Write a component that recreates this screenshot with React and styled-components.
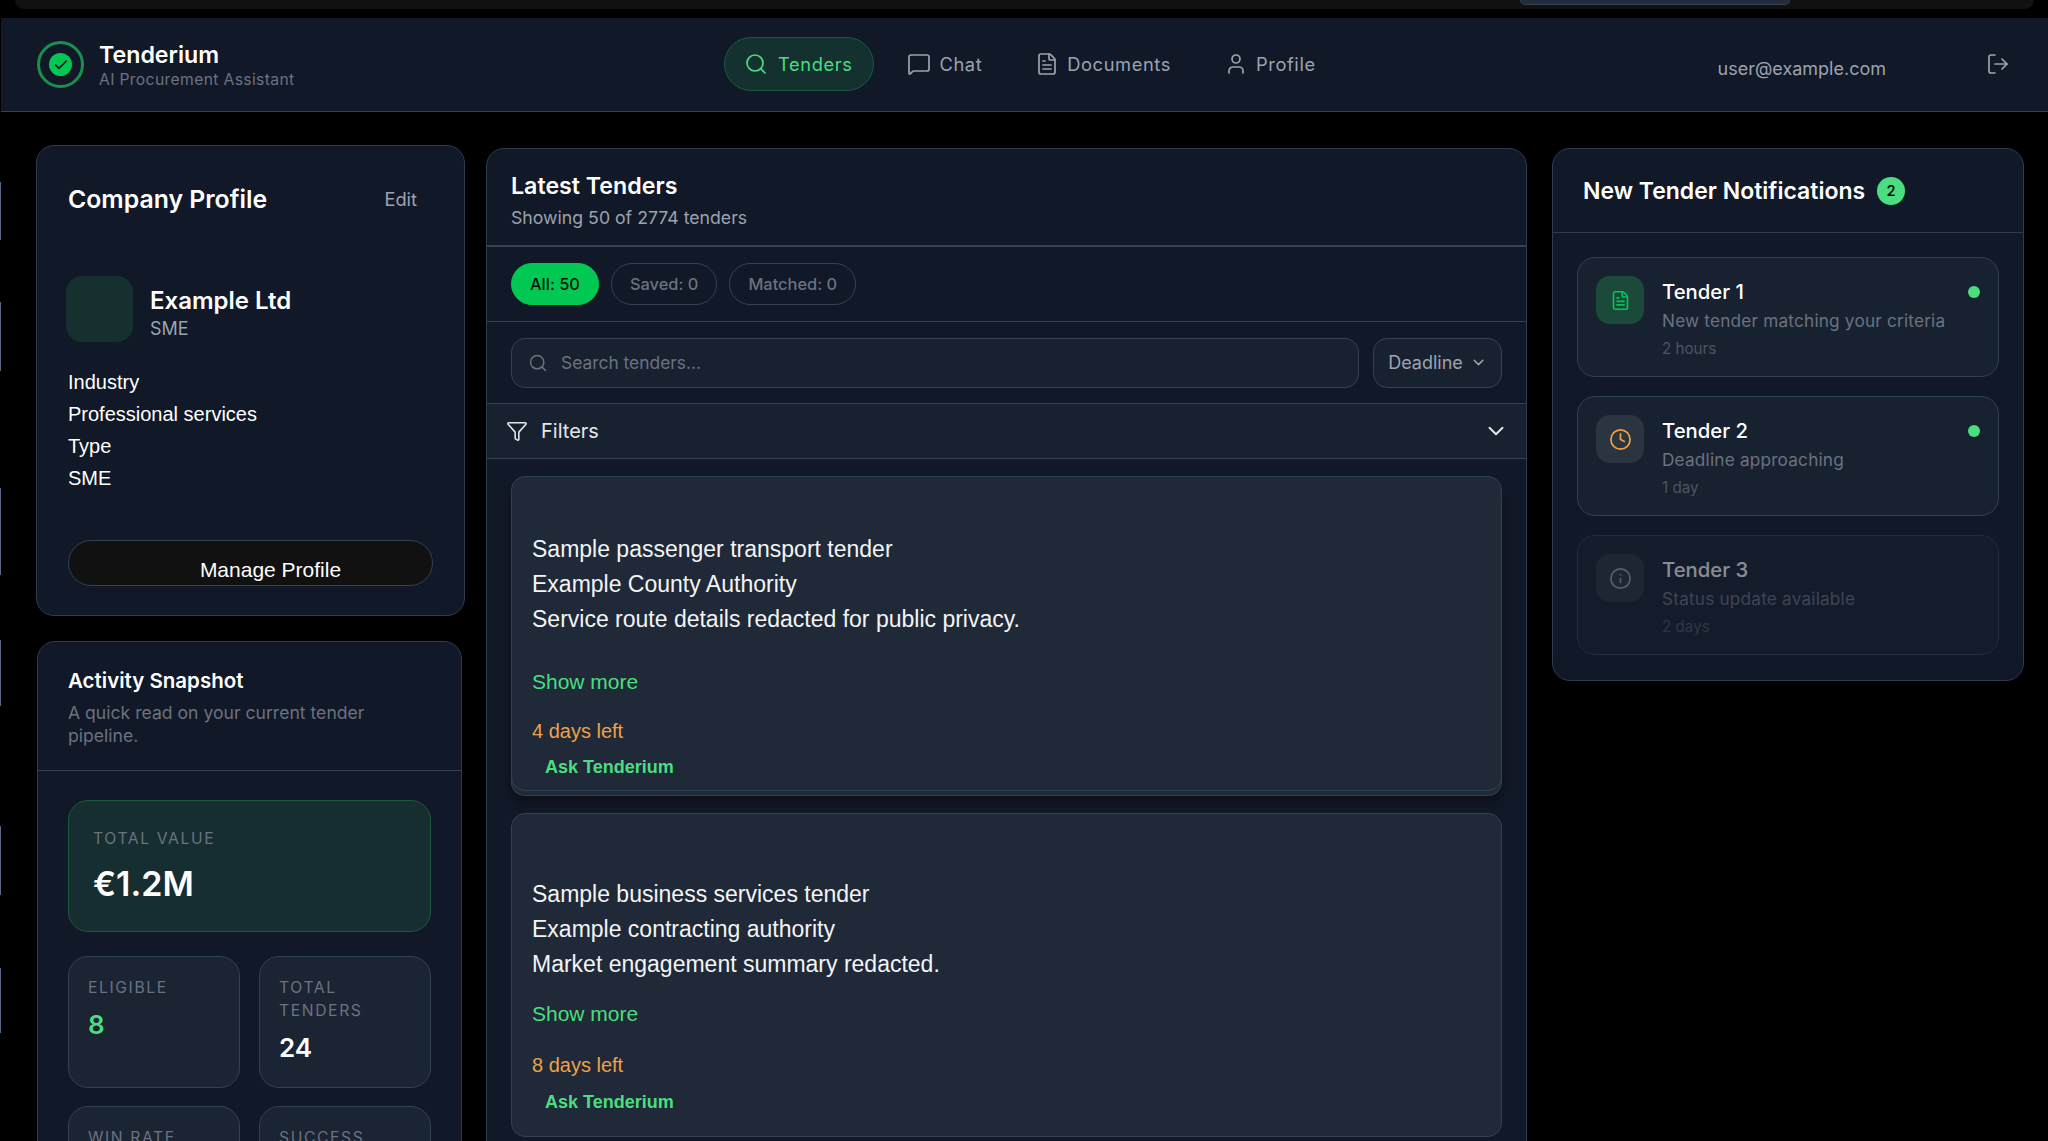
import React from 'react';
import styled, { createGlobalStyle } from 'styled-components';
import { Search, MessageSquare, FileText, User, LogOut, Filter, ChevronDown, Clock, Info, Check } from 'lucide-react';

const notifications = [
    { id: 1, title: 'Tender 1', text: 'New tender matching your criteria', time: '2 hours', kind: 'doc', unread: true },
    { id: 2, title: 'Tender 2', text: 'Deadline approaching', time: '1 day', kind: 'clock', unread: true },
    { id: 3, title: 'Tender 3', text: 'Status update available', time: '2 days', kind: 'info', unread: false },
];

const tenders = [
    {
        lines: ['Sample passenger transport tender', 'Example County Authority', 'Service route details redacted for public privacy.'],
        left: '4 days left', lead: 55, more: 32, days: 23, ask: 11, tail: 11, stacked: true,
    },
    {
        lines: ['Sample business services tender', 'Example contracting authority', 'Market engagement summary redacted.'],
        left: '8 days left', lead: 63, more: 19, days: 25, ask: 12, tail: 22, stacked: false,
    },
];

const noteIcons = { doc: FileText, clock: Clock, info: Info };

const App = () => {
    return (
        <Page>
            <GlobalStyle />
            <TopStrip><StripTab /></TopStrip>
            <Header>
                <Brand>
                    <LogoRing><LogoDot><Check size={16} strokeWidth={2.6} /></LogoDot></LogoRing>
                    <BrandText>
                        <BrandName>Tenderium</BrandName>
                        <BrandSub>AI Procurement Assistant</BrandSub>
                    </BrandText>
                </Brand>
                <Nav>
                    <NavItem $active><Search size={24} strokeWidth={1.7} />Tenders</NavItem>
                    <NavItem><MessageSquare size={24} strokeWidth={1.7} />Chat</NavItem>
                    <NavItem><FileText size={24} strokeWidth={1.7} />Documents</NavItem>
                    <NavItem><User size={24} strokeWidth={1.7} />Profile</NavItem>
                </Nav>
                <Email>user@example.com</Email>
                <LogoutBtn><LogOut size={24} strokeWidth={1.7} /></LogoutBtn>
            </Header>
            <Main>
                <LeftCol>
                    <ProfileCard>
                        <ProfileHead>
                            <ProfileTitle>Company Profile</ProfileTitle>
                            <EditLink>Edit</EditLink>
                        </ProfileHead>
                        <CompanyRow>
                            <Avatar />
                            <CompanyText>
                                <CompanyName>Example Ltd</CompanyName>
                                <CompanyType>SME</CompanyType>
                            </CompanyText>
                        </CompanyRow>
                        <Facts>
                            <div>Industry</div>
                            <div>Professional services</div>
                            <div>Type</div>
                            <div>SME</div>
                        </Facts>
                        <ManageBtn>Manage Profile</ManageBtn>
                    </ProfileCard>
                    <SnapshotCard>
                        <SnapshotHead>
                            <SnapshotTitle>Activity Snapshot</SnapshotTitle>
                            <SnapshotSub>A quick read on your current tender pipeline.</SnapshotSub>
                        </SnapshotHead>
                        <SnapshotBody>
                            <ValueCard>
                                <StatLabel>TOTAL VALUE</StatLabel>
                                <BigValue>€1.2M</BigValue>
                            </ValueCard>
                            <StatGrid>
                                <StatCard>
                                    <StatLabel>ELIGIBLE</StatLabel>
                                    <StatValue $green>8</StatValue>
                                </StatCard>
                                <StatCard>
                                    <StatLabel>TOTAL TENDERS</StatLabel>
                                    <StatValue>24</StatValue>
                                </StatCard>
                                <StatCard>
                                    <StatLabel>WIN RATE</StatLabel>
                                    <StatValue>33%</StatValue>
                                </StatCard>
                                <StatCard>
                                    <StatLabel>SUCCESS</StatLabel>
                                    <StatValue>12</StatValue>
                                </StatCard>
                            </StatGrid>
                        </SnapshotBody>
                    </SnapshotCard>
                </LeftCol>
                <MiddleCard>
                    <ListHead>
                        <ListTitle>Latest Tenders</ListTitle>
                        <ListSub>Showing 50 of 2774 tenders</ListSub>
                    </ListHead>
                    <PillRow>
                        <Pill $active>All: 50</Pill>
                        <Pill>Saved: 0</Pill>
                        <Pill>Matched: 0</Pill>
                    </PillRow>
                    <SearchRow>
                        <SearchBox>
                            <Search size={20} strokeWidth={1.8} />
                            <span>Search tenders...</span>
                        </SearchBox>
                        <SortBtn>Deadline<ChevronDown size={17} strokeWidth={2} /></SortBtn>
                    </SearchRow>
                    <FilterBar>
                        <Filter size={22} strokeWidth={1.7} />
                        <FilterText>Filters</FilterText>
                        <ChevronDown size={26} strokeWidth={1.8} />
                    </FilterBar>
                    <TenderList>
                        {tenders.map((t) => (
                            <TenderCard key={t.left} $lead={t.lead} $tail={t.tail} $stacked={t.stacked}>
                                {t.lines.map((line) => <TenderLine key={line}>{line}</TenderLine>)}
                                <ShowMore $more={t.more}>Show more</ShowMore>
                                <DaysLeft $gap={t.days}>{t.left}</DaysLeft>
                                <AskBtn $gap={t.ask}>Ask Tenderium</AskBtn>
                            </TenderCard>
                        ))}
                    </TenderList>
                </MiddleCard>
                <RightCard>
                    <NoteHead>
                        <NoteHeading>New Tender Notifications</NoteHeading>
                        <CountBadge>2</CountBadge>
                    </NoteHead>
                    <NoteList>
                        {notifications.map((n) => {
                            const Icon = noteIcons[n.kind];
                            return (
                                <NoteCard key={n.id} $dim={!n.unread}>
                                    <NoteIcon $kind={n.kind}><Icon size={n.kind === 'doc' ? 21 : 23} strokeWidth={1.8} /></NoteIcon>
                                    <NoteBody>
                                        <NoteTitle>{n.title}</NoteTitle>
                                        <NoteText>{n.text}</NoteText>
                                        <NoteTime>{n.time}</NoteTime>
                                    </NoteBody>
                                    {n.unread && <UnreadDot />}
                                </NoteCard>
                            );
                        })}
                    </NoteList>
                </RightCard>
            </Main>
        </Page>
    );
};

export default App;

const GlobalStyle = createGlobalStyle`
html, body { margin: 0; padding: 0; background: #000; }
* { box-sizing: border-box; }
`;
const Page = styled.div`
height: 1141px;
overflow: hidden;
color: #fff;
font-family: Inter, "Liberation Sans", sans-serif;
padding-left: 1px;
background: #000 linear-gradient(to bottom,
    transparent 182px, #55687f 182px, #55687f 240px, transparent 240px,
    transparent 302px, #55687f 302px, #55687f 371px, transparent 371px,
    transparent 488px, #55687f 488px, #55687f 575px, transparent 575px,
    transparent 640px, #55687f 640px, #55687f 706px, transparent 706px,
    transparent 826px, #55687f 826px, #55687f 895px, transparent 895px,
    transparent 968px, #55687f 968px, #55687f 1033px, transparent 1033px) 0 0 / 1px 100% no-repeat;
`;
const TopStrip = styled.div`
height: 9px;
margin: 0 14px 9px 14px;
background: #111;
border-radius: 0 0 12px 12px;
padding-left: 1505px;
`;
const StripTab = styled.div`
width: 270px;
height: 5px;
background: #232c3b;
border: 1px solid #374151;
border-top: 0;
border-radius: 0 0 10px 10px;
`;
const Header = styled.header`
height: 94px;
background: #111827;
border-bottom: 1px solid #374151;
display: flex;
align-items: center;
padding: 0 38px 0 36px;
`;
const Brand = styled.div`
flex: 0 0 687px;
display: flex;
align-items: center;
gap: 15px;
`;
const BrandText = styled.div`
margin-top: 2px;
`;
const LogoRing = styled.div`
width: 47px;
height: 47px;
border-radius: 50%;
border: 3px solid #1b8f4e;
display: flex;
align-items: center;
justify-content: center;
`;
const LogoDot = styled.div`
width: 23px;
height: 23px;
border-radius: 50%;
background: #00c853;
color: #0b1720;
display: flex;
align-items: center;
justify-content: center;
`;
const BrandName = styled.div`
font-size: 23.2px;
font-weight: 600;
line-height: 30px;
margin-top: -1px;
`;
const BrandSub = styled.div`
font-size: 15.7px;
line-height: 20px;
letter-spacing: 0.35px;
color: #6b7280;
`;
const Nav = styled.nav`
display: flex;
align-items: center;
gap: 11px;
margin-top: -1px;
`;
const NavItem = styled.a`
height: 54px;
padding: 0 21px 0 19px;
margin-right: ${(p) => (p.$active ? '2px' : '0')};
display: flex;
align-items: center;
gap: ${(p) => (p.$active ? '10px' : '8px')};
border-radius: 27px;
font-size: 18.3px;
font-weight: 400;
letter-spacing: 0.6px;
color: ${(p) => (p.$active ? '#4ade80' : '#9ca3af')};
background: ${(p) => (p.$active ? '#14312f' : 'transparent')};
border: 1px solid ${(p) => (p.$active ? '#1c5a3f' : 'transparent')};
`;
const Email = styled.div`
margin-left: auto;
margin-top: 8px;
font-size: 18px;
color: #9ca3af;
`;
const LogoutBtn = styled.div`
margin-left: 100px;
color: #9ca3af;
display: flex;
margin-top: -1px;
`;
const Main = styled.main`
display: flex;
align-items: flex-start;
padding: 33px 0 0 35px;
`;
const LeftCol = styled.div`
width: 429px;
flex: none;
display: flex;
flex-direction: column;
gap: 25px;
`;
const Panel = styled.section`
background: #111827;
border: 1px solid #2f3b4e;
border-radius: 18px;
`;
const ProfileCard = styled(Panel)`
height: 471px;
padding: 0 31px;
display: flex;
flex-direction: column;
`;
const ProfileHead = styled.div`
display: flex;
justify-content: space-between;
align-items: center;
height: 54px;
margin-top: 26px;
`;
const ProfileTitle = styled.h2`
margin: 0;
font-size: 24.8px;
font-weight: 600;
`;
const EditLink = styled.span`
font-size: 18.3px;
color: #9ca3af;
margin-right: 16px;
`;
const CompanyRow = styled.div`
display: flex;
align-items: center;
gap: 17px;
margin: 50px 0 0 -2px;
`;
const Avatar = styled.div`
width: 67px;
height: 66px;
border-radius: 16px;
background: #16302f;
`;
const CompanyText = styled.div`
margin-top: 8px;
`;
const CompanyName = styled.div`
font-size: 24px;
font-weight: 600;
line-height: 32px;
`;
const CompanyType = styled.div`
font-size: 18px;
line-height: 24px;
color: #9ca3af;
`;
const Facts = styled.div`
margin-top: 24px;
font-family: "Liberation Sans", Arial, sans-serif;
font-size: 20px;
line-height: 32px;
`;
const ManageBtn = styled.button`
margin-top: 46px;
height: 46px;
width: 365px;
padding: 14px 0 0 40px;
background: #111;
color: #fff;
border: 1px solid #334155;
border-radius: 23px;
font-family: "Liberation Sans", Arial, sans-serif;
font-size: 21px;
line-height: 30px;
`;
const SnapshotCard = styled(Panel)`
width: 425px;
margin-left: 1px;
height: 640px;
`;
const SnapshotHead = styled.div`
height: 129px;
padding: 25px 30px 0;
border-bottom: 1px solid #374151;
`;
const SnapshotTitle = styled.h3`
margin: 0;
font-size: 20.5px;
font-weight: 600;
line-height: 28px;
`;
const SnapshotSub = styled.p`
margin: 6px 0 0;
font-size: 17.6px;
line-height: 23px;
color: #6b7280;
`;
const SnapshotBody = styled.div`
padding: 29px 30px 0;
`;
const ValueCard = styled.div`
width: 363px;
height: 132px;
padding: 26px 24px;
background: #162e30;
border: 1px solid #1c5a3f;
border-radius: 20px;
`;
const StatLabel = styled.div`
font-size: 15.7px;
line-height: 23px;
letter-spacing: 1.6px;
color: #6b7280;
`;
const BigValue = styled.div`
font-size: 34px;
font-weight: 600;
line-height: 44px;
margin-top: 12px;
`;
const StatGrid = styled.div`
display: grid;
grid-template-columns: 172px 172px;
grid-auto-rows: 132px;
gap: 18px 19px;
margin-top: 24px;
`;
const StatCard = styled.div`
padding: 19px;
background: #1b2433;
border: 1px solid #334155;
border-radius: 20px;
`;
const StatValue = styled.div`
font-size: 26px;
font-weight: 600;
line-height: 32px;
margin-top: 10px;
color: ${(p) => (p.$green ? '#4ade80' : '#fff')};
`;
const MiddleCard = styled(Panel)`
width: 1041px;
flex: none;
margin: 3px 0 0 21px;
height: 1100px;
`;
const ListHead = styled.div`
height: 98px;
padding: 21px 24px 0;
border-bottom: 2px solid #374151;
`;
const ListTitle = styled.h2`
margin: 0;
font-size: 23.2px;
font-weight: 600;
line-height: 32px;
`;
const ListSub = styled.p`
margin: 0;
font-size: 17.7px;
line-height: 32px;
color: #9ca3af;
`;
const PillRow = styled.div`
height: 75px;
display: flex;
align-items: center;
gap: 12px;
padding: 0 24px;
border-bottom: 1px solid #374151;
`;
const Pill = styled.button`
height: 42px;
padding: 0 18px;
border-radius: 21px;
font-family: Inter, sans-serif;
font-size: 16.4px;
font-weight: 500;
color: ${(p) => (p.$active ? '#04140a' : '#6b7280')};
background: ${(p) => (p.$active ? '#00c853' : 'transparent')};
border: 1px solid ${(p) => (p.$active ? '#00c853' : '#374151')};
`;
const SearchRow = styled.div`
height: 81px;
display: flex;
align-items: center;
gap: 14px;
padding: 0 24px;
`;
const SearchBox = styled.div`
flex: 1;
height: 50px;
display: flex;
align-items: center;
gap: 13px;
padding: 0 16px;
background: #18212f;
border: 1px solid #374151;
border-radius: 14px;
font-size: 17.4px;
color: #6b7280;
`;
const SortBtn = styled.button`
width: 129px;
height: 50px;
display: flex;
align-items: center;
justify-content: center;
gap: 7px;
background: #18212f;
border: 1px solid #374151;
border-radius: 14px;
color: #9ca3af;
font-family: Inter, sans-serif;
font-size: 18px;
`;
const FilterBar = styled.div`
height: 56px;
display: flex;
align-items: center;
padding: 0 17px 0 19px;
background: #18212f;
border-top: 1px solid #374151;
border-bottom: 1px solid #374151;
color: #e5e7eb;
`;
const FilterText = styled.span`
flex: 1;
margin-left: 13px;
font-size: 20px;
`;
const TenderList = styled.div`
padding: 17px 24px 0;
display: flex;
flex-direction: column;
gap: 22px;
`;
const TenderCard = styled.article`
background: #1f2937;
border: 1px solid #334155;
border-radius: 14px;
padding: ${(p) => p.$lead}px 20px ${(p) => p.$tail}px;
box-shadow: ${(p) => (p.$stacked ? '0 5px 0 -1px #1f2937, 0 5px 0 0 #334155, 0 11px 10px rgba(0,0,0,.35)' : 'none')};
font-family: "Liberation Sans", Arial, sans-serif;
`;
const TenderLine = styled.div`
font-size: 23px;
line-height: 35px;
color: #f3f4f6;
`;
const ShowMore = styled.a`
display: block;
margin-top: ${(p) => p.$more}px;
font-size: 21px;
line-height: 26px;
color: #4ade80;
`;
const DaysLeft = styled.div`
margin-top: ${(p) => p.$gap}px;
font-size: 20px;
line-height: 26px;
color: #eda24a;
`;
const AskBtn = styled.div`
margin: ${(p) => p.$gap}px 0 0 13px;
font-size: 18px;
font-weight: 700;
line-height: 24px;
color: #4ade80;
`;
const RightCard = styled(Panel)`
width: 472px;
flex: none;
margin: 3px 0 0 25px;
height: 533px;
`;
const NoteHead = styled.div`
height: 84px;
display: flex;
align-items: center;
gap: 12px;
padding: 0 24px 0 30px;
border-bottom: 1px solid #2f3b4e;
`;
const NoteHeading = styled.h2`
margin: 0;
font-size: 23px;
font-weight: 600;
`;
const CountBadge = styled.span`
width: 28px;
height: 28px;
border-radius: 50%;
background: #4ade80;
color: #04140a;
font-size: 14.5px;
font-weight: 600;
display: flex;
align-items: center;
justify-content: center;
`;
const NoteList = styled.div`
padding: 24px 24px 0;
display: flex;
flex-direction: column;
gap: 19px;
`;
const NoteCard = styled.div`
height: 120px;
display: flex;
align-items: flex-start;
gap: 18px;
padding: 18px 18px 0;
background: #182130;
border: 1px solid #334155;
border-radius: 18px;
opacity: ${(p) => (p.$dim ? 0.5 : 1)};
`;
const NoteIcon = styled.div`
width: 48px;
height: 48px;
flex: none;
border-radius: 14px;
display: flex;
align-items: center;
justify-content: center;
background: ${(p) => (p.$kind === 'doc' ? '#1c4a3a' : '#2b3441')};
color: ${(p) => (p.$kind === 'doc' ? '#00c853' : p.$kind === 'clock' ? '#f0a040' : '#9ca3af')};
`;
const NoteBody = styled.div`
flex: 1;
min-width: 0;
white-space: nowrap;
`;
const NoteTitle = styled.div`
font-size: 20.3px;
font-weight: 500;
line-height: 26px;
margin-top: 3px;
`;
const NoteText = styled.div`
font-size: 17.2px;
line-height: 26px;
margin-top: 3px;
letter-spacing: 0.2px;
color: #6b7280;
`;
const NoteTime = styled.div`
font-size: 15.2px;
line-height: 22px;
margin-top: 4px;
color: #4b5563;
`;
const UnreadDot = styled.span`
width: 12px;
height: 12px;
border-radius: 50%;
background: #4ade80;
margin-top: 10px;
`;
